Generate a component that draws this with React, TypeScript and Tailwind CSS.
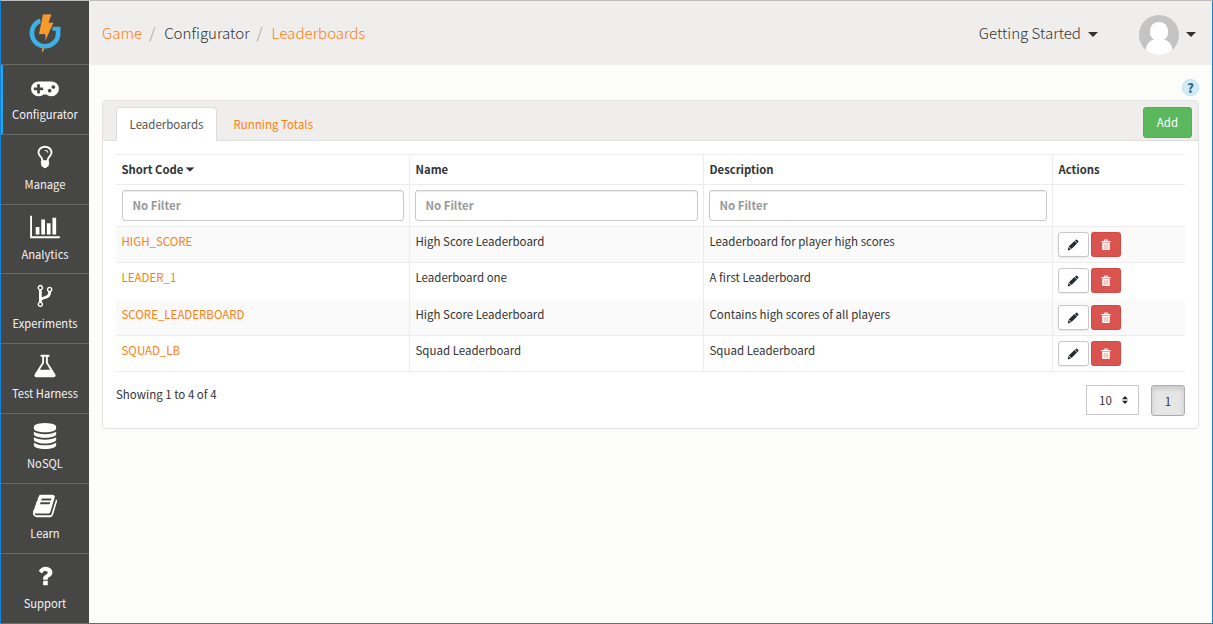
import React from "react";

type IconProps = { d: string; box?: string; className?: string };

const Icon = ({ d, box = "0 0 1792 1792", className }: IconProps) => (
  <svg viewBox={box} className={className} fill="currentColor" aria-hidden="true">
    <path d={d} />
  </svg>
);

const GAMEPAD =
  "M832 1088v-128q0-14-9-23t-23-9h-192v-192q0-14-9-23t-23-9h-128q-14 0-23 9t-9 23v192h-192q-14 0-23 9t-9 23v128q0 14 9 23t23 9h192v192q0 14 9 23t23 9h128q14 0 23-9t9-23v-192h192q14 0 23-9t9-23zm576 64q0-53-37.5-90.5t-90.5-37.5-90.5 37.5-37.5 90.5 37.5 90.5 90.5 37.5 90.5-37.5 37.5-90.5zm256-256q0-53-37.5-90.5t-90.5-37.5-90.5 37.5-37.5 90.5 37.5 90.5 90.5 37.5 90.5-37.5 37.5-90.5zm256 128q0 212-150 362t-362 150q-192 0-338-128h-220q-146 128-338 128-212 0-362-150t-150-362 150-362 362-150h896q212 0 362 150t150 362z";
const BULB =
  "M1120 576q0 13-9.5 22.5t-22.5 9.5-22.5-9.5-9.5-22.5q0-46-54-71t-106-25q-13 0-22.5-9.5t-9.5-22.5 9.5-22.5 22.5-9.5q50 0 99.5 16t87 54 37.5 90zm160 0q0-72-34.5-134t-90-101.5-123-62-136.5-22.5-136.5 22.5-123 62-90 101.5-34.5 134q0 101 68 180 10 11 30.5 33t30.5 33q128 153 141 298h228q13-145 141-298 10-11 30.5-33t30.5-33q68-79 68-180zm128 0q0 155-103 268-45 49-74.5 87t-59.5 95.5-34 107.5q47 28 47 82 0 37-25 64 25 27 25 64 0 52-45 81 13 23 13 47 0 46-31.5 71t-77.5 25q-20 44-60 70t-87 26-87-26-60-70q-46 0-77.5-25t-31.5-71q0-24 13-47-45-29-45-81 0-37 25-64-25-27-25-64 0-54 47-82-4-50-34-107.5t-59.5-95.5-74.5-87q-103-113-103-268 0-99 44.5-184.5t117-142 164-89 186.5-32.5 186.5 32.5 164 89 117 142 44.5 184.5z";
const CHART =
  "M640 896v512h-256v-512h256zm384-512v1024h-256v-1024h256zm1024 1152v128h-2048v-1536h128v1408h1920zm-640-896v768h-256v-768h256zm384-384v1152h-256v-1152h256z";
const FORK =
  "M672 1472q0-40-28-68t-68-28-68 28-28 68 28 68 68 28 68-28 28-68zm0-1152q0-40-28-68t-68-28-68 28-28 68 28 68 68 28 68-28 28-68zm640 128q0-40-28-68t-68-28-68 28-28 68 28 68 68 28 68-28 28-68zm96 0q0 52-26 96.5t-70 69.5q-2 287-226 414-67 38-203 81-128 40-169.5 71t-41.5 100v26q44 25 70 69.5t26 96.5q0 80-56 136t-136 56-136-56-56-136q0-52 26-96.5t70-69.5v-820q-44-25-70-69.5t-26-96.5q0-80 56-136t136-56 136 56 56 136q0 52-26 96.5t-70 69.5v497q54-26 154-57 55-17 87.5-29.5t70.5-31 59-39.5 40.5-51 28-69.5 8.5-91.5q-44-25-70-69.5t-26-96.5q0-80 56-136t136-56 136 56 56 136z";
const FLASK =
  "M1591 1448q56 89 21.5 152.5t-140.5 63.5h-1152q-106 0-140.5-63.5t21.5-152.5l503-793v-399h-64q-26 0-45-19t-19-45 19-45 45-19h512q26 0 45 19t19 45-19 45-45 19h-64v399zm-779-725l-272 429h712l-272-429-20-31v-436h-128v436z";
const DATABASE =
  "M896 768q237 0 443-43t325-127v170q0 69-103 128t-280 93.5-385 34.5-385-34.5-280-93.5-103-128v-170q119 84 325 127t443 43zm0 768q237 0 443-43t325-127v170q0 69-103 128t-280 93.5-385 34.5-385-34.5-280-93.5-103-128v-170q119 84 325 127t443 43zm0-384q237 0 443-43t325-127v170q0 69-103 128t-280 93.5-385 34.5-385-34.5-280-93.5-103-128v-170q119 84 325 127t443 43zm0-1152q208 0 385 34.5t280 93.5 103 128v128q0 69-103 128t-280 93.5-385 34.5-385-34.5-280-93.5-103-128v-128q0-69 103-128t280-93.5 385-34.5z";
const BOOK =
  "M1703 478q40 57 18 129l-275 906q-19 64-76.5 107.5t-122.5 43.5h-923q-77 0-148.5-53.5t-99.5-131.5q-24-67-2-127 0-4 3-27t4-37q1-8-3-21.5t-3-19.5q2-11 8-21t16.5-23.5 16.5-23.5q23-38 45-91.5t30-91.5q3-10 .5-30t-.5-28q3-11 17-28t17-23q21-36 42-92t25-90q1-9-2.5-32t.5-28q4-13 22-30.5t22-22.5q19-26 42.5-84.5t27.5-96.5q1-8-3-25.5t-2-26.5q2-8 9-18t18-23 17-21q8-12 16.5-30.5t15-35 16-36 19.5-32 26.5-23.5 36-11.5 47.5 5.5l-1 3q38-9 51-9h761q74 0 114 56t18 130l-274 906q-36 119-71.5 153.5t-128.5 34.5h-869q-27 0-38 15-11 16-1 43 24 70 144 70h923q29 0 56-15.5t35-41.5l300-987q7-22 5-57 38 15 59 43zm-1064 2q-4 13 2 22.5t20 9.5h608q13 0 25.5-9.5t16.5-22.5l21-64q4-13-2-22.5t-20-9.5h-608q-13 0-25.5 9.5t-16.5 22.5zm-83 256q-4 13 2 22.5t20 9.5h608q13 0 25.5-9.5t16.5-22.5l21-64q4-13-2-22.5t-20-9.5h-608q-13 0-25.5 9.5t-16.5 22.5z";
const QUESTION =
  "M1088 1256v240q0 16-12 28t-28 12h-240q-16 0-28-12t-12-28v-240q0-16 12-28t28-12h240q16 0 28 12t12 28zm316-600q0 54-15.5 101t-35 76.5-55 59.5-57.5 43.5-61 35.5q-41 23-68.5 65t-27.5 67q0 17-12 32.5t-28 15.5h-240q-15 0-25.5-18.5t-10.5-37.5v-45q0-83 65-156.5t143-108.5q59-27 84-56t25-76q0-42-46.5-74t-107.5-32q-65 0-108 29-35 25-107 115-13 16-31 16-12 0-25-8l-164-125q-13-10-15.5-25t5.5-28q160-266 464-266 80 0 161 31t146 83 106 127.5 41 158.5z";

const nav = [
  { label: "Configurator", d: GAMEPAD, box: "0 0 1920 1792", icon: "w-[28px] h-[26px]", h: "h-[70px]", active: true },
  { label: "Manage", d: BULB, box: "0 0 1792 1792", icon: "w-[26px] h-[26px]", h: "h-[70px]" },
  { label: "Analytics", d: CHART, box: "0 0 2048 1792", icon: "w-[30px] h-[26px]", h: "h-[69px]" },
  { label: "Experiments", d: FORK, box: "0 0 1792 1792", icon: "w-[26px] h-[26px]", h: "h-[70px]" },
  { label: "Test Harness", d: FLASK, box: "0 0 1792 1792", icon: "w-[26px] h-[26px]", h: "h-[70px]" },
  { label: "NoSQL", d: DATABASE, box: "0 0 1792 1792", icon: "w-[26px] h-[26px]", h: "h-[70px]" },
  { label: "Learn", d: BOOK, box: "0 0 1792 1792", icon: "w-[26px] h-[26px]", h: "h-[70px]" },
  { label: "Support", d: QUESTION, box: "0 0 1792 1792", icon: "w-[26px] h-[26px]", h: "h-[69px]" },
];

const rows = [
  { code: "HIGH_SCORE", name: "High Score Leaderboard", desc: "Leaderboard for player high scores", row: "h-[36px] bg-[#fafafa] border-b leading-[29px]", pad: "pt-[5px]" },
  { code: "LEADER_1", name: "Leaderboard one", desc: "A first Leaderboard", row: "h-[36px] leading-[29px]", pad: "pt-[5px]" },
  { code: "SCORE_LEADERBOARD", name: "High Score Leaderboard", desc: "Contains high scores of all players", row: "h-[37px] bg-[#fafafa] border-b leading-[31px]", pad: "pt-[6px]" },
  { code: "SQUAD_LB", name: "Squad Leaderboard", desc: "Squad Leaderboard", row: "h-[36px] border-b leading-[29px]", pad: "pt-[5px]" },
];

const Caret = ({ className = "" }: { className?: string }) => (
  <svg viewBox="0 0 10 5" className={`w-[10px] h-[5px] ${className}`} fill="#333" aria-hidden="true">
    <path d="M0 0h10L5 5z" />
  </svg>
);

const Logo = () => (
  <svg viewBox="0 0 34 42" className="w-[34px] h-[42px]" aria-hidden="true">
    <path d="M12.500 9.700A13.200 13.200 0 1 0 30 21V17.500M32.200 17.200H23.500" fill="none" stroke="none" />
    <path d="M12.500 9.700A13.200 13.200 0 1 0 30.200 23" fill="none" stroke="#3fb0e5" strokeWidth="4.600" />
    <path d="M24.500 15.400h8v4h-8zM27.800 19h4.600v4.500h-4.600z" fill="#3fb0e5" transform="translate(0 .3)" />
    <path d="M14.700 3h9.300l-3 8.300h5L17 31.500v-8h-6.500z" fill="#f79a2c" stroke="#464644" strokeWidth=".8" />
    <path d="M13.800 37.500h2.700l-2.200 4.300z" fill="#f79a2c" />
  </svg>
);

const Pencil = () => (
  <svg viewBox="0 0 12 12" className="w-[12px] h-[12px]" fill="#222d33" aria-hidden="true">
    <path d="M8 1.700 9.100.8q.6-.5 1.200.1l1 1q.6.6 0 1.200l-1 1.100zM7.500 2.100l2.500 2.500-5.500 5.500-2.800-2.500zM1.400 8l2.600 2.500L.8 11.400z" />
  </svg>
);

const Trash = () => (
  <svg viewBox="0 0 10 12" className="w-[10px] h-[12px]" aria-hidden="true">
    <path d="M3.3 2V1h3.4v1" fill="none" stroke="#fff" strokeWidth="1" />
    <path d="M.5 2h9v1.5h-9zM1.2 4h7.6v6.2q0 .8-.8.8H2q-.8 0-.8-.8z" fill="#fff" />
    <path d="M3.2 5v5M5 5v5M6.8 5v5" stroke="#d9534f" strokeWidth=".5" />
  </svg>
);

const COLS = "grid grid-cols-[293px_294px_349px_133px] border-[#ececec]";
const CELL = "border-l border-[#ececec] pl-[5.5px]";

const Filter = () => (
  <input
    placeholder="No Filter"
    className="block h-[31px] w-full rounded-[3px] border border-[#c8c8c8] bg-white px-[9.5px] pb-[1px] text-[11.4px] font-bold placeholder:text-[#999] shadow-[inset_0_1px_1px_rgba(0,0,0,0.075)]"
  />
);

export default function App() {
  return (
    <div className="flex h-[624px] w-[1213px] overflow-hidden border border-[#1683d8] border-t-[#bdbdbd] bg-[#fcfcfb] font-['Noto_Sans_CJK_SC',sans-serif] text-[11.5px] leading-[18px] text-[#333]">
      <nav className="flex w-[88px] shrink-0 flex-col bg-[#464644] text-[11.2px] text-[#f4f4f4]">
        <div className="flex h-[64px] shrink-0 justify-center border-b border-[#686866] pt-[10px]">
          <Logo />
        </div>
        {nav.map((n) => (
          <a
            key={n.label}
            className={`flex shrink-0 flex-col items-center border-b border-[#686866] pt-[9px] last:border-b-0 ${n.h} ${n.active ? "shadow-[inset_2px_0_0_#1ca8ea]" : ""}`}
          >
            <Icon d={n.d} box={n.box} className={`shrink-0 text-white ${n.icon}`} />
            <span className="mt-[5px] whitespace-nowrap">{n.label}</span>
          </a>
        ))}
      </nav>

      <div className="flex min-w-0 flex-1 flex-col">
        <header className="flex h-[64px] shrink-0 items-center bg-[#efeeed] pl-[13px] pr-[16px] text-[15.1px] font-light leading-[24px]">
          <div className="flex pb-[2px]">
            <a className="text-[#ff7f0e]">Game</a>
            <span className="px-[7px] text-[#999]">/</span>
            <span className="px-[2px]">Configurator</span>
            <span className="pl-[5px] pr-[9px] text-[#999]">/</span>
            <a className="text-[#ff7f0e]">Leaderboards</a>
          </div>
          <div className="ml-auto flex items-center">
            <span className="pb-[2px]">Getting Started</span>
            <Caret className="ml-[7px] mt-[2px]" />
            <svg viewBox="0 0 40 40" className="ml-[41px] mt-[4px] h-[40px] w-[40px] rounded-full" aria-hidden="true">
              <rect width="40" height="40" fill="#c4c4c4" />
              <rect x="11" y="7" width="18" height="19" rx="8.500" fill="#fff" />
              <path d="M6 36q2-10.500 9.500-11.500L17 23h6l1.500 1.500Q32 25.500 34 36v4H6z" fill="#fff" />
            </svg>
            <Caret className="ml-[7px] mt-[2px]" />
          </div>
        </header>

        <div className="flex h-[35px] shrink-0 justify-end pr-[13px] pt-[14px]">
          <span className="flex h-[17px] w-[17px] items-center justify-center rounded-full border border-[#bce0f0] bg-[#d5ebf6] text-[13px] font-black leading-none text-[#2b6f92]">
            ?
          </span>
        </div>

        <section className="ml-[13px] h-[329px] w-[1097px] rounded-[4px] border border-[#e2e2e2] bg-white">
          <div className="flex h-[40px] rounded-t-[3px] border-b border-[#dfdfdf] bg-[#efeeed] pl-[13px] pr-[6px] pt-[6px]">
            <div className="h-[34px] w-[101px] rounded-t-[4px] border border-b-0 border-[#dcdcdc] bg-white text-center leading-[33px] text-[#555]">
              Leaderboards
            </div>
            <a className="ml-[16.5px] leading-[35px] text-[#ff7f0e]">Running Totals</a>
            <button className="ml-auto h-[31px] w-[49px] rounded-[3px] border border-[#55ad55] bg-[#5cb85c] pb-[1px] text-white">
              Add
            </button>
          </div>

          <div className="mx-[13px] mt-[13px] border-t border-[#ececec]">
            <div className={`${COLS} h-[30px] border-b text-[11.3px] font-bold leading-[29px]`}>
              <div className="flex items-center pl-[5.5px]">
                Short Code
                <Caret className="ml-[2px] scale-90" />
              </div>
              <div className={CELL}>Name</div>
              <div className={CELL}>Description</div>
              <div className={CELL}>Actions</div>
            </div>
            <div className={`${COLS} h-[42px] border-b`}>
              <div className="pl-[6px] pr-[5px] pt-[5px]"><Filter /></div>
              <div className="border-l border-[#ececec] px-[5px] pt-[5px]"><Filter /></div>
              <div className="border-l border-[#ececec] px-[5px] pt-[5px]"><Filter /></div>
              <div className={CELL} />
            </div>
            {rows.map((r) => (
              <div key={r.code} className={`${COLS} ${r.row}`}>
                <a className="pl-[5.5px] text-[#ff7f0e]">{r.code}</a>
                <div className={CELL}>{r.name}</div>
                <div className={CELL}>{r.desc}</div>
                <div className={`flex gap-[2px] border-l border-[#ececec] pl-[5px] ${r.pad}`}>
                  <button className="flex h-[25px] w-[31px] items-center justify-center rounded-[3px] border border-[#c8c8c8] bg-white pr-[2px] shadow-[0_1px_1px_rgba(0,0,0,0.08)]">
                    <Pencil />
                  </button>
                  <button className="flex h-[25px] w-[30px] items-center justify-center rounded-[3px] border border-[#d43f3a]/60 bg-[#d9534f]">
                    <Trash />
                  </button>
                </div>
              </div>
            ))}
          </div>

          <div className="mx-[13px] flex pt-[13px]">
            <span>Showing 1 to 4 of 4</span>
            <div className="ml-auto flex h-[30px] w-[53px] items-center justify-between border border-[#c8c8c8] bg-white pl-[12px] pr-[10px]">
              10
              <svg viewBox="0 0 6 8" className="h-[8px] w-[6px]" fill="#222" aria-hidden="true">
                <path d="M0 3.200 3 0l3 3.200zM0 4.800 3 8l3-3.200z" />
              </svg>
            </div>
            <button className="ml-[12px] h-[31px] w-[34px] rounded-[3px] border border-[#adadad] bg-[#e6e6e6] shadow-[inset_0_3px_5px_rgba(0,0,0,0.125)]">
              1
            </button>
          </div>
        </section>
      </div>
    </div>
  );
}
